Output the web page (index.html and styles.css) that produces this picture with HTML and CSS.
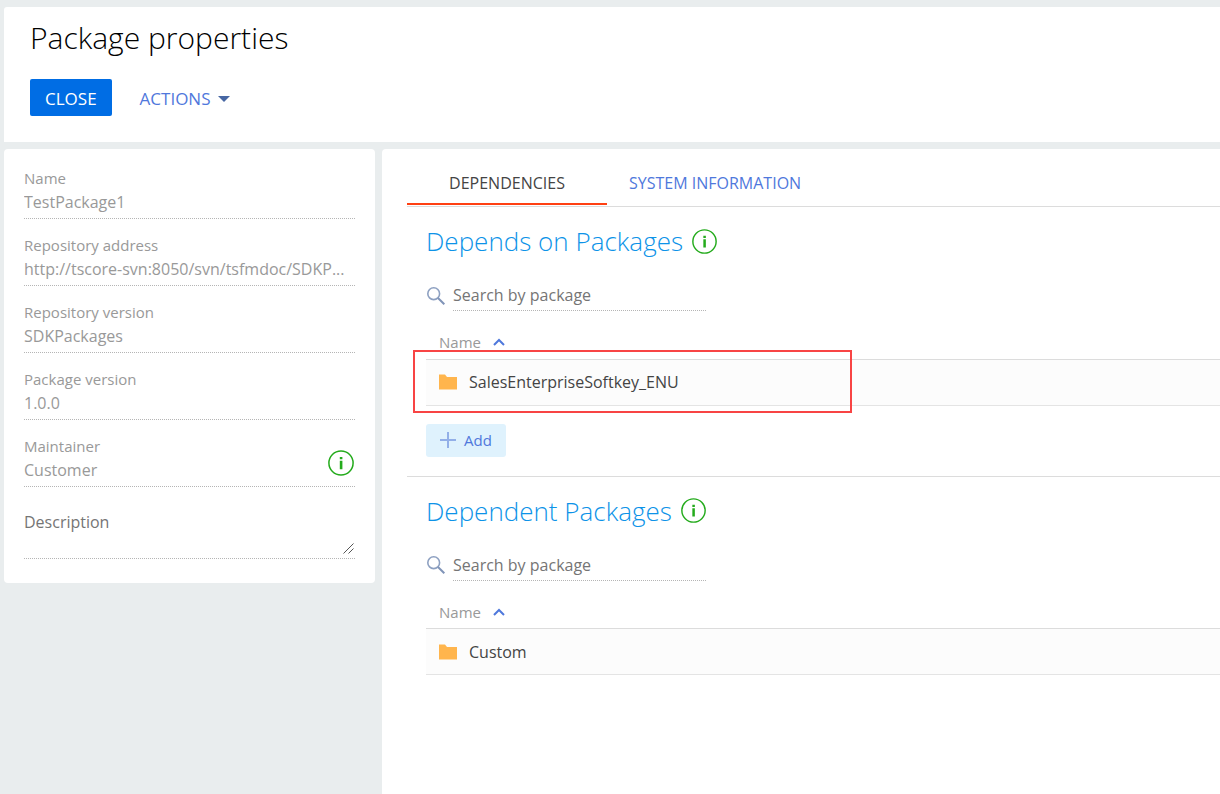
FILE: index.html
```html
<!DOCTYPE html>
<html lang="en">
<head>
<meta charset="utf-8">
<title>Package properties</title>
<link rel="stylesheet" href="styles.css">
</head>
<body>
<svg class="sprite" aria-hidden="true">
  <symbol id="info" viewBox="0 0 26 26"><circle cx="13" cy="13" r="12.1" fill="none" stroke="#24ab1c" stroke-width="1.5"/><path d="M11.8 7h2.6v2.3h-2.6zM11.8 10.7h2.6v8.6h-2.6z" fill="#24ab1c"/></symbol>
  <symbol id="search" viewBox="0 0 18 18"><circle cx="6.7" cy="6.7" r="5.9" fill="none" stroke="#8da0c1" stroke-width="1.6"/><path d="M11 11l6.3 6.2" fill="none" stroke="#8094b8" stroke-width="2"/></symbol>
  <symbol id="folder" viewBox="0 0 18 16"><path d="M0 .5h6l2 2.5h10v12.5H0z" fill="#ffb54d"/></symbol>
  <symbol id="sort" viewBox="0 0 12 8"><path d="M1 7l5-5 5 5" fill="none" stroke="#4f78dc" stroke-width="2"/></symbol>
</svg>

<header class="page-header">
  <h1 class="page-title">Package properties</h1>
  <div class="toolbar">
    <button class="btn-close" type="button">CLOSE</button>
    <button class="btn-actions" type="button">ACTIONS
      <svg width="12" height="6" viewBox="0 0 12 6"><path d="M0 0h12L6 6z" fill="#4767a3"/></svg>
    </button>
  </div>
</header>

<div class="layout">
  <aside class="card">
    <div class="field"><label for="name">Name</label><input id="name" value="TestPackage1" readonly></div>
    <div class="field"><label for="repo">Repository address</label><input id="repo" value="http://tscore-svn:8050/svn/tsfmdoc/SDKP..." readonly></div>
    <div class="field"><label for="repo-version">Repository version</label><input id="repo-version" value="SDKPackages" readonly></div>
    <div class="field"><label for="version">Package version</label><input id="version" value="1.0.0" readonly></div>
    <div class="field">
      <label for="maintainer">Maintainer</label><input id="maintainer" value="Customer" readonly>
      <svg class="field-info" width="26" height="26"><use href="#info"/></svg>
    </div>
    <div class="description">
      <textarea placeholder="Description" aria-label="Description"></textarea>
      <svg class="grip" width="11" height="11" viewBox="0 0 11 11"><path d="M.5 10.5l10-10M5.500 10.500l5-5" stroke="#555" stroke-width="1"/></svg>
    </div>
  </aside>

  <main class="content">
    <div class="tabs" role="tablist">
      <button class="tab tab-active" type="button" role="tab" aria-selected="true">DEPENDENCIES</button>
      <button class="tab" type="button" role="tab" aria-selected="false">SYSTEM INFORMATION</button>
    </div>

    <section class="section">
      <h2 class="section-title">Depends on Packages <svg width="25" height="25"><use href="#info"/></svg></h2>
      <div class="search">
        <svg width="18" height="18"><use href="#search"/></svg>
        <input type="search" placeholder="Search by package" aria-label="Search by package">
      </div>
      <div class="grid-wrap">
        <table class="grid">
          <thead><tr><th><span class="cell">Name <svg width="12" height="8"><use href="#sort"/></svg></span></th></tr></thead>
          <tbody><tr><td><span class="cell"><svg width="18" height="16"><use href="#folder"/></svg> SalesEnterpriseSoftkey_ENU</span></td></tr></tbody>
        </table>
        <div class="highlight"></div>
      </div>
      <button class="btn-add" type="button">
        <svg width="16" height="16" viewBox="0 0 16 16"><path d="M8 0v16M0 8h16" stroke="#92afe8" stroke-width="2"/></svg>
        Add
      </button>
    </section>

    <section class="section">
      <h2 class="section-title">Dependent Packages <svg width="25" height="25"><use href="#info"/></svg></h2>
      <div class="search">
        <svg width="18" height="18"><use href="#search"/></svg>
        <input type="search" placeholder="Search by package" aria-label="Search by package">
      </div>
      <table class="grid">
        <thead><tr><th><span class="cell">Name <svg width="12" height="8"><use href="#sort"/></svg></span></th></tr></thead>
        <tbody><tr><td><span class="cell"><svg width="18" height="16"><use href="#folder"/></svg> Custom</span></td></tr></tbody>
      </table>
    </section>
  </main>
</div>
</body>
</html>
```
FILE: styles.css
```css
* {
  box-sizing: border-box;
}

body {
  margin: 0;
  padding: 7px 0 0 4px;
  min-height: 100vh;
  display: flex;
  flex-direction: column;
  gap: 7px;
  background: #e9edee;
  color: #444;
  font-family: "Open Sans", sans-serif;
  font-size: 16px;
}

button,
input,
textarea {
  font: inherit;
  border: 0;
  border-radius: 0;
  background: none;
  outline: 0;
}

button {
  cursor: pointer;
}

svg {
  flex: none;
}

.sprite {
  position: absolute;
  width: 0;
  height: 0;
}

.page-header {
  padding: 10px 26px 26px;
  background: #fff;
  border-radius: 3px 0 0 0;
}

.page-title {
  margin: 0 0 20px;
  color: #000;
  font-size: 30px;
  font-weight: 300;
  line-height: 42px;
}

.toolbar {
  display: flex;
  gap: 28px;
  font-size: 17px;
}

.btn-close {
  height: 37px;
  padding: 2px 15px 0;
  border-radius: 2px;
  background: #006de4;
  color: #fff;
}

.btn-actions {
  display: flex;
  align-items: center;
  gap: 7px;
  padding: 2px 0 0;
  color: #4f78dc;
}

.layout {
  flex: 1;
  display: grid;
  grid-template-columns: 371px 1fr;
  gap: 7px;
}

.card {
  align-self: start;
  display: flex;
  flex-direction: column;
  padding: 20px;
  padding-bottom: 24px;
  background: #fff;
  border-radius: 4px;
}

.field {
  position: relative;
  display: flex;
  flex-direction: column;
  margin-bottom: 17px;
}

.field label {
  margin-bottom: 3px;
  color: #999;
  font-size: 15px;
  line-height: 18px;
}

.field input {
  width: 100%;
  height: 29px;
  padding: 0 0 4px;
  border-bottom: 1px dotted #b5b5b5;
  color: #999;
}

.field-info {
  position: absolute;
  right: 1px;
  bottom: 11px;
}

.description {
  position: relative;
  display: flex;
}

.description textarea {
  width: 100%;
  height: 55px;
  padding: 6px 0 0;
  border-bottom: 1px dotted #b5b5b5;
  line-height: 24px;
  resize: vertical;
}

.description textarea::-webkit-resizer {
  background: transparent;
}

.grip {
  position: absolute;
  right: 1px;
  bottom: 5px;
  pointer-events: none;
}

.description textarea::placeholder,
.search input::placeholder {
  color: #757575;
  opacity: 1;
}

.content {
  padding: 12px 0 0 25px;
  background: #fff;
  border-radius: 4px 0 0 0;
}

.tabs {
  display: flex;
  padding-bottom: 1px;
  border-bottom: 1px solid #dcdcdc;
}

.tab {
  height: 44px;
  padding: 2px 22px 0;
  border-bottom: 2px solid transparent;
  color: #4f78dc;
}

.tab-active {
  width: 200px;
  border-bottom-color: #ff4013;
  color: #444;
}

.section {
  padding: 16px 0 19px 19px;
}

.section + .section {
  border-top: 1px solid #dcdcdc;
}

.section-title {
  display: flex;
  align-items: center;
  gap: 9px;
  margin: 0 0 21px;
  color: #0d93e8;
  font-size: 26px;
  font-weight: 300;
  line-height: 36px;
}

.search {
  display: flex;
  align-items: center;
  gap: 8px;
  padding-left: 1px;
}

.search input {
  width: 253px;
  height: 31px;
  padding: 0;
  border-bottom: 1px dotted #b5b5b5;
  color: #444;
}

.grid-wrap {
  position: relative;
}

.grid {
  width: 100%;
  border-collapse: collapse;
}

.grid th,
.grid td {
  padding: 0 13px;
  text-align: left;
}

.grid th {
  height: 48px;
  padding-top: 15px;
  border-bottom: 1px solid #dcdcdc;
  color: #999;
  font-size: 15px;
  font-weight: 400;
}

.grid td {
  height: 46px;
  border-bottom: 1px solid #e4e4e4;
  background: #fcfcfc;
}

.cell {
  display: flex;
  align-items: center;
  gap: 12px;
}

.highlight {
  position: absolute;
  inset: 39px auto -7px -13px;
  width: 439px;
  border: 2px solid #f84444;
}

.btn-add {
  display: flex;
  align-items: center;
  gap: 8px;
  height: 33px;
  margin-top: 18px;
  padding: 0 14px 1px;
  border-radius: 3px;
  background: #dff2fd;
  color: #4f78dc;
  font-size: 15px;
}
```
